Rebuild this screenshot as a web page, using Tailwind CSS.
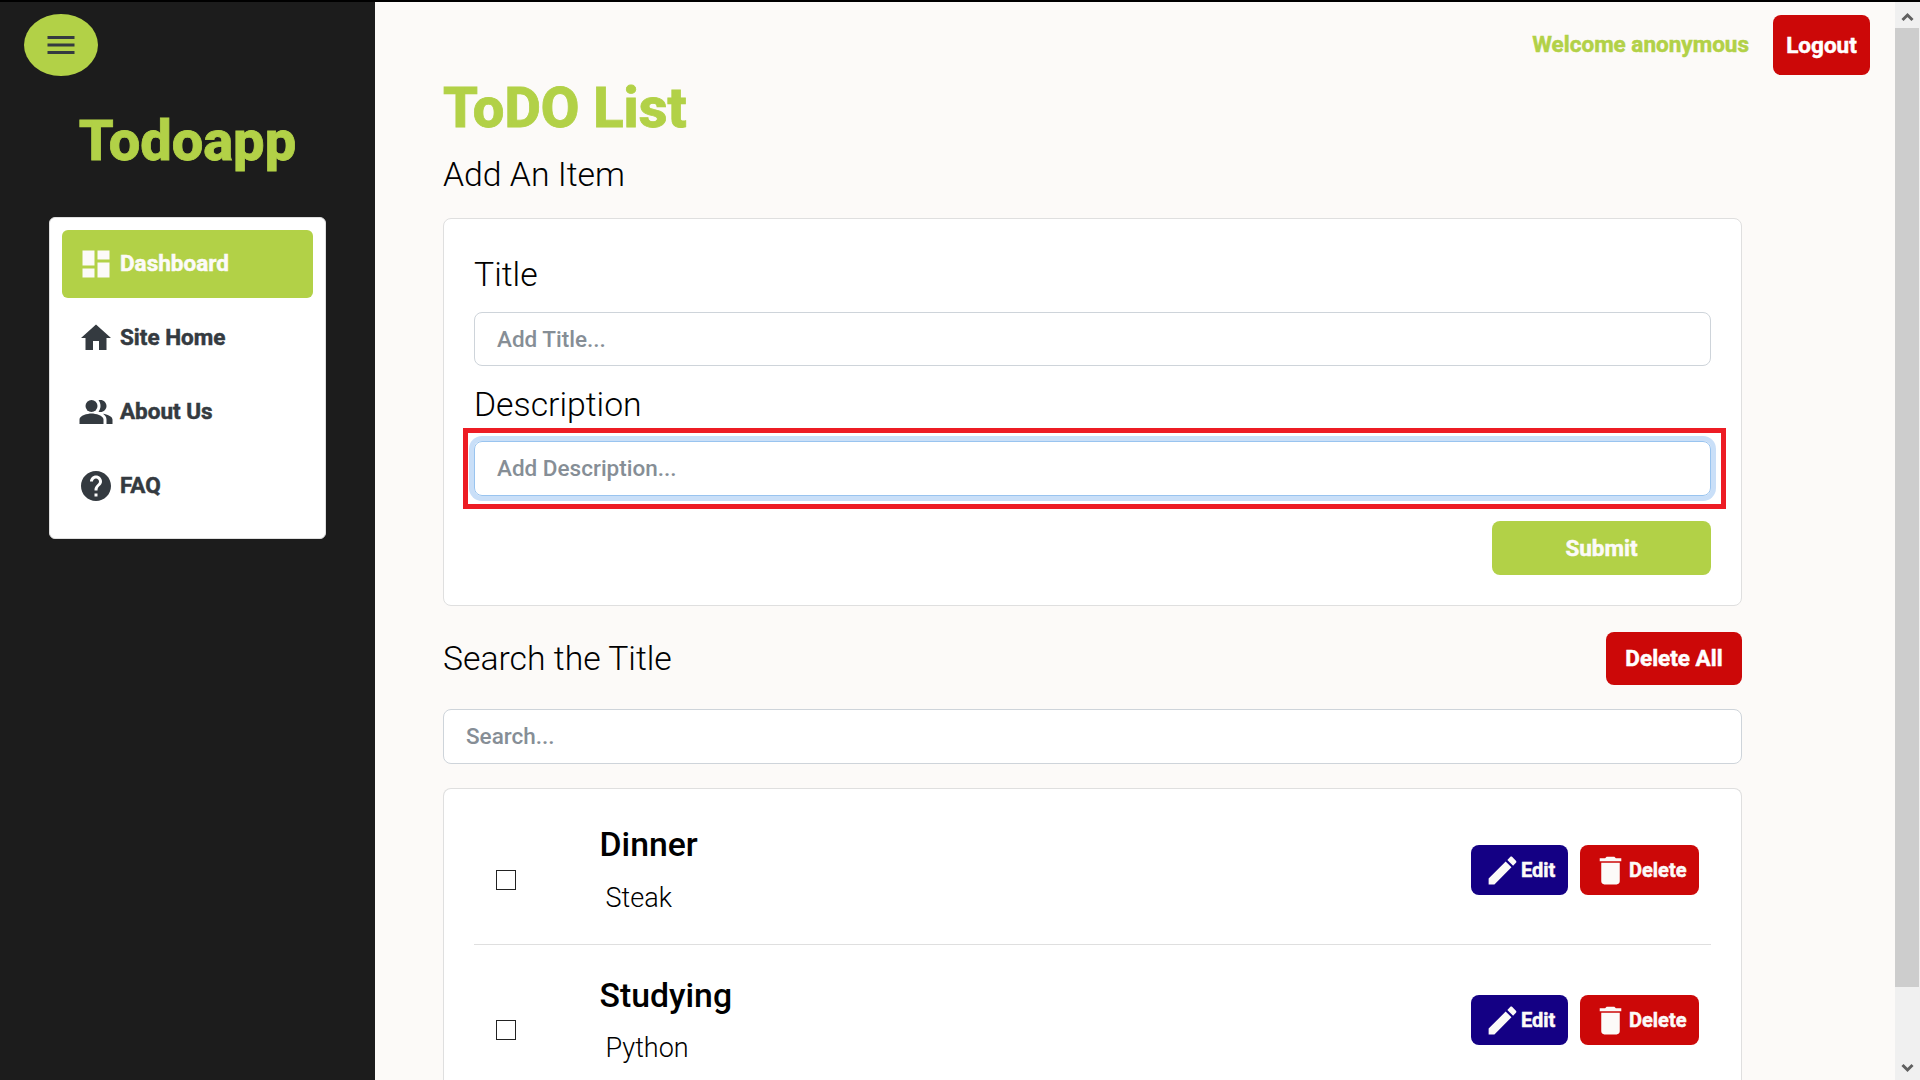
<!DOCTYPE html>
<html lang="en">
<head>
<meta charset="utf-8">
<title>ToDO List</title>
<script src="https://cdn.jsdelivr.net/npm/@tailwindcss/browser@4"></script>
</head>
<body class="flex h-[1080px] w-[1920px] overflow-hidden border-t-2 border-black bg-[#fcfaf8] font-['Roboto',sans-serif] text-black">

<aside class="flex w-[375px] shrink-0 flex-col bg-[#1c1c1c] pt-3">
  <button class="ml-6 flex h-[62px] w-[74px] items-center justify-center rounded-[50%] bg-[#b2d147] text-[#343a40]">
    <svg class="size-9" viewBox="0 0 24 24" fill="currentColor"><path d="M3 18h18v-2H3v2zm0-5h18v-2H3v2zm0-7v2h18V6H3z"/></svg>
  </button>
  <h1 class="mt-[33px] h-[64px] text-center text-[56px] leading-[64px] font-extrabold text-[#b2d147] [-webkit-text-stroke:0.8px]">Todoapp</h1>
  <nav class="mt-[44px] ml-[49px] flex h-[322px] w-[277px] flex-col gap-1.5 rounded-md border border-[#dfdfdf] bg-white p-3 text-[22.5px] font-bold text-[#343a40] [-webkit-text-stroke:0.5px]">
    <a class="flex h-[68px] shrink-0 items-center gap-1.5 rounded-md bg-[#b2d147] pl-4 text-[#fcfaf8]">
      <svg class="size-9" viewBox="0 0 24 24" fill="currentColor"><path d="M3 13h8V3H3v10zm0 8h8v-6H3v6zm10 0h8V11h-8v10zm0-18v6h8V3h-8z"/></svg>
      <span>Dashboard</span>
    </a>
    <a class="flex h-[68px] shrink-0 items-center gap-1.5 pl-4">
      <svg class="size-9" viewBox="0 0 24 24" fill="currentColor"><path d="M10 20v-6h4v6h5v-8h3L12 3 2 12h3v8z"/></svg>
      <span>Site Home</span>
    </a>
    <a class="flex h-[68px] shrink-0 items-center gap-1.5 pl-4">
      <svg class="size-9" viewBox="0 0 24 24" fill="currentColor"><path d="M16.67 13.13C18.04 14.06 19 15.32 19 17v3h4v-3c0-2.18-3.57-3.47-6.33-3.87z"/><circle cx="9" cy="8" r="4"/><path d="M15 12c2.21 0 4-1.79 4-4s-1.79-4-4-4c-.47 0-.91.1-1.33.24C14.5 5.27 15 6.58 15 8s-.5 2.73-1.33 3.76c.42.14.86.24 1.33.24zM9 13c-2.67 0-8 1.34-8 4v3h16v-3c0-2.66-5.33-4-8-4z"/></svg>
      <span>About Us</span>
    </a>
    <a class="flex h-[68px] shrink-0 items-center gap-1.5 pl-4">
      <svg class="size-9" viewBox="0 0 24 24" fill="currentColor"><path d="M12 2C6.48 2 2 6.48 2 12s4.480 10 10 10 10-4.480 10-10S17.520 2 12 2zm1 17h-2v-2h2v2zm2.070-7.750l-.9.920C13.450 12.900 13 13.500 13 15h-2v-.5c0-1.100.450-2.100 1.170-2.830l1.240-1.260c.370-.360.590-.860.590-1.410 0-1.100-.9-2-2-2s-2 .9-2 2H8c0-2.210 1.790-4 4-4s4 1.790 4 4c0 .880-.360 1.680-.930 2.250z"/></svg>
      <span>FAQ</span>
    </a>
  </nav>
</aside>

<main class="flex min-w-0 flex-1 flex-col">
  <header class="flex h-[73px] shrink-0 items-end justify-end gap-6 pr-[25px] [-webkit-text-stroke:0.5px]">
    <span class="pb-[17px] text-[22.5px] leading-[28px] font-bold text-[#b2d147]">Welcome anonymous</span>
    <button class="h-[60px] w-[97px] rounded-lg bg-[#cc0808] pt-0.5 text-[22.5px] font-bold text-white">Logout</button>
  </header>

  <div class="ml-[68px] flex min-h-0 w-[1299px] flex-1 flex-col">
    <h2 class="h-[66px] shrink-0 text-[56px] leading-[66px] font-extrabold text-[#b2d147] [-webkit-text-stroke:0.8px]">ToDO List</h2>
    <h3 class="mt-[14px] h-[40px] shrink-0 text-[33.75px] leading-[40px] font-light">Add An Item</h3>

    <section class="mt-[23px] h-[388px] shrink-0 rounded-lg border border-[#dfdfdf] bg-white px-[30px] pt-[35px]">
      <label class="block h-[42px] text-[33.75px] leading-[42px] font-light">Title</label>
      <div class="mt-4 flex h-[54px] items-center rounded-lg border border-[#ced4da] pt-px pl-[22px] text-[22.5px] font-medium text-[#868e96]">Add Title...</div>
      <label class="mt-[18px] block h-[42px] text-[33.75px] leading-[42px] font-light">Description</label>
      <div class="-mr-[15px] -ml-[11px] mt-0.5 h-[81px] border-5 border-[#ed1c24] pt-2 pr-2.5 pl-1.5">
        <div class="flex h-[55px] items-center rounded-lg border border-[#99c4ef] pt-px pl-[22px] text-[22.5px] font-medium text-[#868e96] ring-5 ring-[#c9dff8]">Add Description...</div>
      </div>
      <button class="mt-3 ml-auto block h-[54px] w-[219px] rounded-lg bg-[#b2d147] pt-0.5 text-[22.5px] font-bold text-[#fcfaf8] [-webkit-text-stroke:0.5px]">Submit</button>
    </section>

    <div class="mt-[26px] flex h-[53px] shrink-0 items-center justify-between">
      <h3 class="text-[33.75px] leading-[42px] font-light">Search the Title</h3>
      <button class="h-[53px] w-[136px] rounded-lg bg-[#cc0808] pt-px text-[22.5px] font-bold text-white [-webkit-text-stroke:0.5px]">Delete All</button>
    </div>
    <div class="mt-6 flex h-[55px] shrink-0 items-center rounded-lg border border-[#ced4da] bg-white pt-px pl-[22px] text-[22.5px] font-medium text-[#868e96]">Search...</div>

    <section class="mt-6 min-h-0 flex-1 rounded-t-lg border border-b-0 border-[#dfdfdf] bg-white px-[30px] pt-[5px]">
      <article class="flex h-[151px] border-b border-[#dfdfdf]">
        <span class="mt-[76px] ml-[22px] size-5 border border-[#222]"></span>
        <div class="ml-[83.5px] pt-[31px]">
          <h4 class="h-[40px] text-[33.75px] leading-[40px] font-medium">Dinner</h4>
          <p class="mt-[17px] ml-1.5 h-8 text-[27px] leading-8 font-light">Steak</p>
        </div>
        <div class="mt-[51px] mr-3 ml-auto flex h-[50px] gap-3 text-[20px] font-bold text-[#fcfaf8] [-webkit-text-stroke:0.5px]">
          <button class="flex w-[97px] items-center rounded-lg bg-[#140084] pl-[13px]"><svg class="size-[37px]" viewBox="0 0 24 24" fill="currentColor"><path d="M3 17.250V21h3.750L17.810 9.940l-3.750-3.750L3 17.250zM20.710 7.040c.390-.390.390-1.020 0-1.410l-2.340-2.340c-.390-.390-1.020-.390-1.410 0l-1.830 1.830 3.750 3.750 1.830-1.830z"/></svg><span>Edit</span></button>
          <button class="flex w-[119px] items-center rounded-lg bg-[#cc0808] pl-[12px]"><svg class="size-[37px]" viewBox="0 0 24 24" fill="currentColor"><path d="M6 19c0 1.100.9 2 2 2h8c1.100 0 2-.9 2-2V7H6v12zM19 4h-3.500l-1-1h-5l-1 1H5v2h14V4z"/></svg><span>Delete</span></button>
        </div>
      </article>
      <article class="flex h-[134px]">
        <span class="mt-[75px] ml-[22px] size-5 border border-[#222]"></span>
        <div class="ml-[83.5px] pt-[31px]">
          <h4 class="h-[40px] text-[33.75px] leading-[40px] font-medium">Studying</h4>
          <p class="mt-4 ml-1.5 h-8 text-[27px] leading-8 font-light">Python</p>
        </div>
        <div class="mt-[50px] mr-3 ml-auto flex h-[50px] gap-3 text-[20px] font-bold text-[#fcfaf8] [-webkit-text-stroke:0.5px]">
          <button class="flex w-[97px] items-center rounded-lg bg-[#140084] pl-[13px]"><svg class="size-[37px]" viewBox="0 0 24 24" fill="currentColor"><path d="M3 17.250V21h3.750L17.810 9.940l-3.750-3.750L3 17.250zM20.710 7.040c.390-.390.390-1.020 0-1.410l-2.340-2.340c-.390-.390-1.020-.390-1.410 0l-1.830 1.830 3.750 3.750 1.830-1.830z"/></svg><span>Edit</span></button>
          <button class="flex w-[119px] items-center rounded-lg bg-[#cc0808] pl-[12px]"><svg class="size-[37px]" viewBox="0 0 24 24" fill="currentColor"><path d="M6 19c0 1.100.9 2 2 2h8c1.100 0 2-.9 2-2V7H6v12zM19 4h-3.500l-1-1h-5l-1 1H5v2h14V4z"/></svg><span>Delete</span></button>
        </div>
      </article>
    </section>
  </div>
</main>

<div class="flex w-[25px] shrink-0 flex-col items-center bg-[#f0f0f0]">
  <svg class="h-[26px] w-[25px] shrink-0" viewBox="0 0 25 26" fill="none" stroke="#606060" stroke-width="3"><path d="M7.500 18l5-5 5 5"/></svg>
  <div class="h-[959px] w-6 shrink-0 self-start bg-[#cdcdcd]"></div>
  <svg class="mt-auto h-[24px] w-[25px] shrink-0" viewBox="0 0 25 24" fill="none" stroke="#606060" stroke-width="3"><path d="M7.500 9l5 5 5-5"/></svg>
</div>
</body>
</html>
